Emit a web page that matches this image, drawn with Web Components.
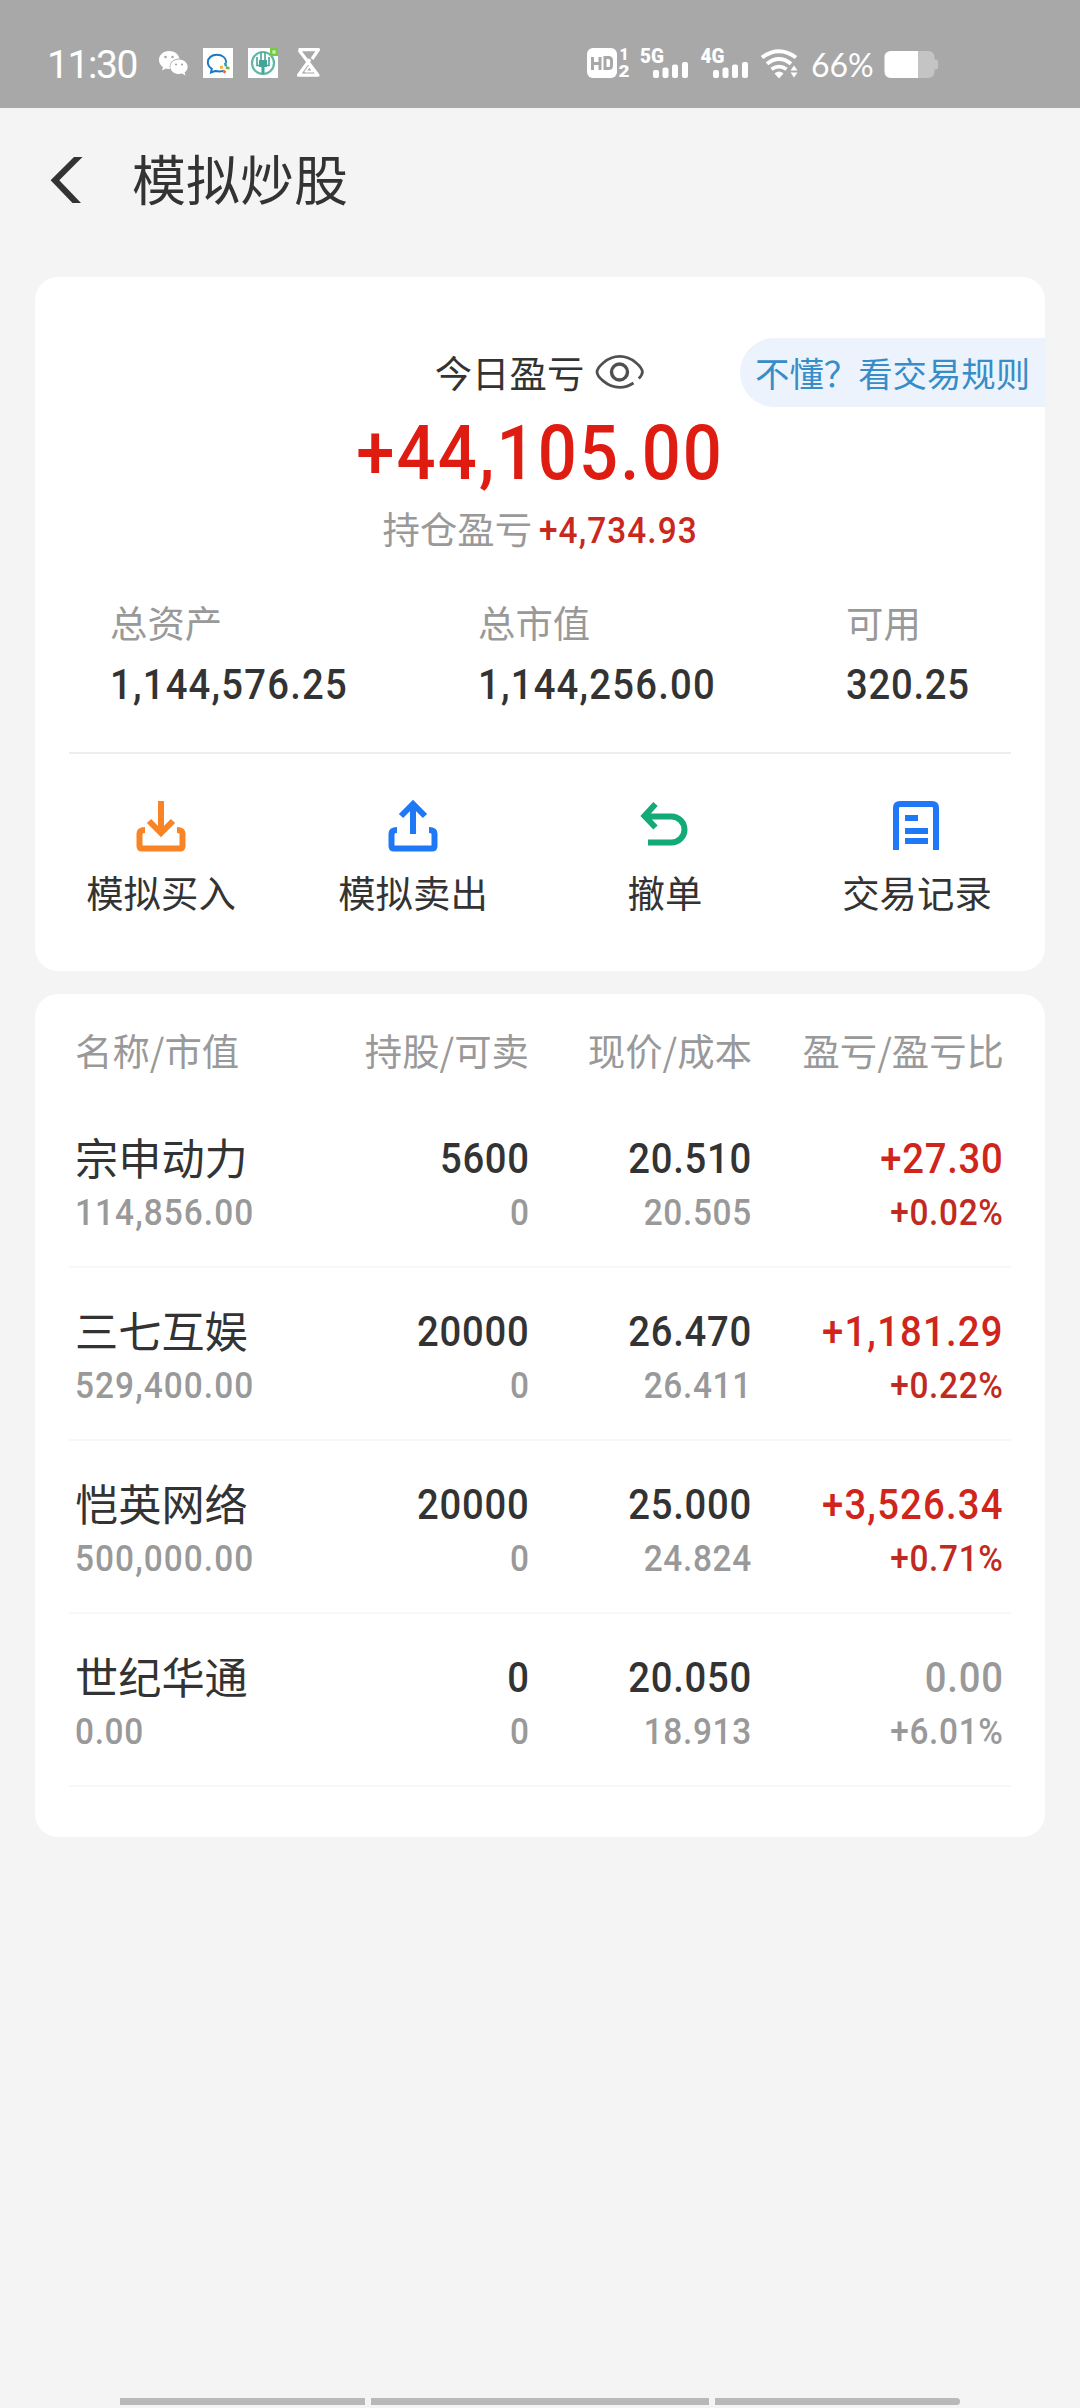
<!DOCTYPE html>
<html lang="zh-CN">
<head>
<meta charset="utf-8">
<title>模拟炒股</title>
<style>
  html, body {
    margin: 0;
    background: #f4f4f4;
  }
  body {
    width: 1080px;
    height: 2408px;
    overflow: hidden;
    font-family: "Noto Sans CJK SC", sans-serif;
    color: #333;
  }
</style>
</head>
<body>
<trade-page></trade-page>

<script>
const define = (name, html, setup) => {
  const template = document.createElement('template');
  template.innerHTML = html;
  customElements.define(name, class extends HTMLElement {
    constructor() {
      super();
      this.attachShadow({ mode: 'open' }).appendChild(template.content.cloneNode(true));
    }
    connectedCallback() {
      if (setup) setup(this, this.shadowRoot);
    }
  });
};

/* condensed figures: size and colour come from the user */
define('num-text', /*html*/ `
  <style>
    :host {
      display: block;
      white-space: nowrap;
      font-family: Roboto, sans-serif;
      font-weight: 500;
      line-height: 44px;
      font-size: 42px;
    }
    span {
      display: inline-block;
      letter-spacing: 0.02em;
      transform: scaleX(0.91);
      transform-origin: var(--num-origin, left) center;
    }
    /* figures with thousands separators are set a little looser */
    .grouped { letter-spacing: 0.032em; }
  </style>
  <span><slot></slot></span>
`, (host, root) => {
  const update = () => root.querySelector('span').classList.toggle('grouped', host.textContent.includes(','));
  root.querySelector('slot').addEventListener('slotchange', update);
  update();
});

define('status-bar', /*html*/ `
  <style>
    :host {
      display: flex;
      align-items: flex-start;
      box-sizing: border-box;
      height: 108px;
      padding: 40px 0 0 47px;
      background: #a8a8a8;
      color: #fff;
    }
    svg { display: block; flex: none; }
    .time {
      width: 105px;
      font: 400 39px/50px Roboto, sans-serif;
      letter-spacing: -1.4px;
    }
    .battery {
      width: 73px;
      font: 400 32px/50px Lato, sans-serif;
      white-space: nowrap;
    }
    text { font-family: Roboto, sans-serif; font-weight: 900; }
  </style>
  <span class="time">11:30</span>
  <svg width="433" height="50" viewBox="152 40 433 50">
    <path fill="#fff" d="M169 51c-6 0-10 4-10 9 0 3 1.500 5.500 4 7l-1 3.500 4-2c1.500.4 2.500.6 4 .5-1.500-6 3-10.500 9.500-10.500-1-4.500-5-7.500-10.500-7.500z"/>
    <path fill="#fff" d="M179 59.500c-5 0-8.700 3.200-8.700 7.200s3.700 7.300 8.700 7.300c1 0 2-.1 3-.4l3.500 1.900-.9-3.100c2-1.300 3-3.400 3-5.700 0-4-3.700-7.200-8.600-7.200z"/>
    <g fill="#a8a8a8"><circle cx="165.500" cy="57" r="1.300"/><circle cx="172.500" cy="57" r="1.300"/><circle cx="176" cy="64.500" r="1.100"/><circle cx="182" cy="64.500" r="1.100"/></g>
    <rect x="203" y="48" width="30" height="30" fill="#fff"/>
    <path fill="none" stroke="#1b79c4" stroke-width="2" d="M223 71c-2 .6-5 .5-8 0l-4 1.500.8-3.700c-2.700-1.700-4-4-4-6.500 0-4.500 4-7.500 9-7.500 5.500 0 9.300 3 9.500 8"/>
    <path fill="#2a9bd8" d="M224 63l2.500-1 .5 4-2.500.5z"/><path fill="#7cb342" d="M226 66l3.500 1v2.500l-4-.5z"/>
    <path fill="#f0592b" d="M223 69.500l3 1.500-.7 2.500-2-.5z"/><path fill="#f9b233" d="M220 66l3-.5v3l-3 .5z"/>
    <rect x="248" y="48" width="30" height="30" fill="#fff"/>
    <circle cx="263" cy="63" r="11" fill="none" stroke="#5fb8a6" stroke-width="2.200"/>
    <path fill="#45a596" d="M259 60h8v7h-2.500v7h-3v-7H259z"/>
    <path fill="none" stroke="#45a596" stroke-width="1.600" d="M257 57v8.500h3M269 57v8.500h-3M261 52v10M265 52v10"/>
    <rect x="270" y="48" width="8" height="8" fill="#7ac943"/><circle cx="274" cy="52" r="2" fill="#b9ecb0"/>
    <g fill="none" stroke="#fff" stroke-width="3.200" stroke-linejoin="round">
      <path d="M298.500 49.700h20l-6.500 9.300M299 50l19 25.200h-19.500l11.500-16"/>
      <path stroke-width="2" d="M305.500 71.500h7.500l-3.500-5.500z"/>
    </g>
  </svg>
  <svg width="226" height="50" viewBox="585 40 226 50">
    <rect x="587" y="48" width="30" height="30" rx="6" fill="#fff"/>
    <path fill="none" stroke="#a8a8a8" stroke-width="3" d="M592.500 57v13M600 57v13M592.500 63.500h7.500M605 57.500h3.500q3 0 3 3v5q0 3-3 3H605z"/>
    <g fill="#fff">
      <text x="619.500" y="60" font-size="16">1</text>
      <text x="618.500" y="77.300" font-size="16" textLength="11" lengthAdjust="spacingAndGlyphs">2</text>
      <text x="640" y="63" font-size="20.500" textLength="24" lengthAdjust="spacingAndGlyphs">5G</text>
      <text x="700.500" y="63" font-size="20.500" textLength="24" lengthAdjust="spacingAndGlyphs">4G</text>
      <rect x="653" y="70" width="6" height="8" rx="2"/><rect x="662.500" y="67.500" width="6" height="10.500" rx="2"/><rect x="672" y="64.500" width="6" height="13.500" rx="2"/><rect x="682" y="62" width="6" height="16" rx="2"/>
      <rect x="713" y="70" width="6" height="8" rx="2"/><rect x="722.500" y="67.500" width="6" height="10.500" rx="2"/><rect x="732" y="64.500" width="6" height="13.500" rx="2"/><rect x="742" y="62" width="6" height="16" rx="2"/>
      <path d="M774.500 73.500q4.700-4 9 0l-4.500 5z"/>
      <path d="M794 65.500l3.500 5h-7zM794 77.500l3.500-5h-7z"/>
    </g>
    <g fill="none" stroke="#fff" stroke-width="4">
      <path d="M762 57.500q17-12.500 34 0"/><path d="M767 63.700q12-9.500 24 0"/><path stroke-width="3.700" d="M771.500 69.300q7.500-5.500 15 0"/>
    </g>
  </svg>
  <span class="battery">66%</span>
  <svg width="56" height="50" viewBox="885 40 56 50">
    <path fill="#c4c4c4" d="M892 51h37q6.500 0 6.500 6.500v2h1q2.500 0 2.500 2.500v5q0 2.500-2.500 2.500h-1v2q0 6.500-6.500 6.500h-37z"/>
    <path fill="#fff" d="M892 51h27v27h-27q-6.500 0-6.500-6.500v-14q0-6.500 6.500-6.500z"/>
  </svg>
`);

define('nav-header', /*html*/ `
  <style>
    :host {
      display: flex;
      align-items: center;
      height: 144px;
      padding-left: 50px;
    }
    svg { width: 34px; height: 48px; margin-right: 48px; }
    span { font-size: 54px; line-height: 70px; margin-top: -5px; }
  </style>
  <svg viewBox="50 156 34 48"><path fill="#333" d="M74 157h8.500L59.300 180.200 81 203h-8.500L50.600 180.300z"/></svg>
  <span><slot></slot></span>
`);

define('panel-card', /*html*/ `
  <style>
    :host {
      display: block;
      position: relative;
      box-sizing: border-box;
      margin: 0 35px 23px;
      border-radius: 23px;
      background: #fff;
      overflow: hidden;
    }
  </style>
  <slot></slot>
`);

define('rules-link', /*html*/ `
  <style>
    /* floats over the right edge of the card */
    :host {
      position: absolute;
      right: 0;
      top: 61px;
      box-sizing: border-box;
      width: 305px;
      height: 69px;
      padding-left: 15px;
      border-radius: 35px 0 0 35px;
      background: #ecf3fc;
      color: #378dc8;
      font-size: 34.400px;
      line-height: 69px;
      white-space: nowrap;
    }
  </style>
  <slot></slot>
`);

define('profit-summary', /*html*/ `
  <style>
    :host {
      display: flex;
      flex-direction: column;
      align-items: center;
      padding-top: 70px;
      font-size: 37.400px;
    }
    .title {
      display: flex;
      align-items: center;
      height: 50px;
      line-height: 50px;
    }
    svg { width: 50px; height: 36px; margin: 0 0 0 11px; }
    .today {
      --num-origin: center;
      margin-top: 21px;
      font-size: 75.500px;
      line-height: 70px;
      color: #df1c12;
    }
    .hold {
      display: flex;
      margin: 18px 0 0 16px;
      line-height: 44px;
      color: #999;
    }
    .hold num-text {
      margin: 3px 0 0 7px;
      font-size: 36.700px;
      color: #c9281e;
    }
  </style>
  <div class="title">
    今日盈亏
    <svg viewBox="596 354 50 36" fill="none" stroke="#505050" stroke-width="2.800">
      <path d="M639.800 378.500c2.600-2.600 3.600-4.800 3.600-6.500 0-4-9.500-15.600-22.700-15.600s-22.700 11.600-22.700 15.600 9.500 15.400 22.700 15.400c5.200 0 9.700-1.700 13.800-4.400"/>
      <circle cx="620.500" cy="372" r="8" stroke-width="3.400"/>
    </svg>
  </div>
  <num-text class="today"></num-text>
  <div class="hold">持仓盈亏<num-text></num-text></div>
`, (host, root) => {
  root.querySelector('.today').textContent = host.getAttribute('today');
  root.querySelector('.hold num-text').textContent = host.getAttribute('hold');
});

define('asset-stat', /*html*/ `
  <style>
    :host { display: block; }
    div {
      margin-bottom: 19px;
      font-size: 37.400px;
      line-height: 44px;
      color: #999;
    }
  </style>
  <div></div>
  <num-text></num-text>
`, (host, root) => {
  root.querySelector('div').textContent = host.getAttribute('label');
  root.querySelector('num-text').textContent = host.getAttribute('value');
});

const icons = {
  buy: `<g stroke="#f98425"><path d="M26 2v32M14 22l12 12 12-12"/><path stroke-linejoin="round" d="M10 31q-5.500 0-5.500 4v12q0 2.500 2.500 2.500h38q2.500 0 2.500-2.500V35q0-4-5.500-4"/></g>`,
  sell: `<g stroke="#1f78f6"><path d="M26 35V5M14 17L26 5l12 12"/><path stroke-linejoin="round" d="M10 31q-5.500 0-5.500 4v12q0 2.500 2.500 2.500h38q2.500 0 2.500-2.500V35q0-4-5.500-4"/></g>`,
  cancel: `<path stroke="#12aa78" d="M16.500 5L5.500 17l11 11.500M6 17.500h26.500a12.700 12.700 0 0 1 0 26H9"/>`,
  record: `<g stroke="#1f78f6"><path d="M5 51V9q0-4 4-4h32q4 0 4 4v42"/><path d="M14 19h13M14 32h23M14 42h23"/></g>`
};

define('trade-action', /*html*/ `
  <style>
    :host {
      display: flex;
      flex-direction: column;
      align-items: center;
      font-size: 37.400px;
      line-height: 44px;
    }
    svg { width: 52px; height: 54px; margin-bottom: 17px; fill: none; stroke-width: 6; }
  </style>
  <svg viewBox="0 0 52 54"></svg>
  <slot></slot>
`, (host, root) => {
  root.querySelector('svg').innerHTML = icons[host.getAttribute('icon')];
});

define('holding-head', /*html*/ `
  <style>
    :host {
      display: grid;
      grid-template-columns: 215px 239px 223px 252px;
      padding: 0 40px;
      height: 67px;
      font-size: 37.400px;
      line-height: 44px;
      color: #999;
      text-align: right;
      white-space: nowrap;
    }
    ::slotted(:first-child) { text-align: left; }
  </style>
  <slot></slot>
`);

define('holding-row', /*html*/ `
  <style>
    :host {
      display: grid;
      grid-template-columns: 215px 239.500px 222.500px 252px;
      align-content: start;
      row-gap: 10px;
      box-sizing: border-box;
      height: 173px;
      margin: 0 34px;
      padding: 39px 6px 0;
      border-bottom: 2px solid #f8f8f8;
      --num-origin: right;
    }
    .name { font-size: 43.200px; line-height: 44px; white-space: nowrap; }
    num-text { text-align: right; padding-top: 3px; }
    .sub { font-size: 36.700px; color: #999; padding-top: 0; }
    .value { text-align: left; --num-origin: left; }
    :host([trend="up"]) .gain { color: #cf251b; }
    :host([trend="up"]) .rate { color: #c12a21; }
    :host([trend="flat"]) .gain { color: #999; }
  </style>
  <span class="name"></span>
  <num-text class="count"></num-text>
  <num-text class="price"></num-text>
  <num-text class="gain"></num-text>
  <num-text class="sub value"></num-text>
  <num-text class="sub sellable"></num-text>
  <num-text class="sub cost"></num-text>
  <num-text class="sub rate"></num-text>
`, (host, root) => {
  ['name', 'count', 'price', 'gain', 'value', 'sellable', 'cost', 'rate'].forEach(key => {
    root.querySelector('.' + key).textContent = host.getAttribute(key);
  });
});

define('gesture-bar', /*html*/ `
  <style>
    :host {
      display: grid;
      grid-template-columns: 245px 338px 245px;
      gap: 6px;
      height: 7px;
      margin: auto 120px 3px;
    }
    i { background: #b9b9b9; }
    i:first-child { border-radius: 4px 0 0 4px; }
    i:last-child { border-radius: 0 4px 4px 0; }
  </style>
  <i></i><i></i><i></i>
`);

define('trade-page', /*html*/ `
  <style>
    :host {
      display: flex;
      flex-direction: column;
      height: 2408px;
    }
    nav-header { margin-bottom: 25px; }
    .overview { height: 694px; }
    .stats {
      display: grid;
      grid-template-columns: repeat(3, 368px);
      margin: 47px 0 0 75px;
    }
    hr {
      height: 2px;
      margin: 45px 34px;
      border: 0;
      background: #eee;
    }
    .actions {
      display: grid;
      grid-template-columns: repeat(4, 252px);
    }
    .holdings { height: 843px; padding-top: 34px; }
  </style>
  <status-bar></status-bar>
  <nav-header>模拟炒股</nav-header>
  <panel-card class="overview">
    <profit-summary today="+44,105.00" hold="+4,734.93"></profit-summary>
    <rules-link>不懂？看交易规则</rules-link>
    <div class="stats">
      <asset-stat label="总资产" value="1,144,576.25"></asset-stat>
      <asset-stat label="总市值" value="1,144,256.00"></asset-stat>
      <asset-stat label="可用" value="320.25"></asset-stat>
    </div>
    <hr>
    <div class="actions">
      <trade-action icon="buy">模拟买入</trade-action>
      <trade-action icon="sell">模拟卖出</trade-action>
      <trade-action icon="cancel">撤单</trade-action>
      <trade-action icon="record">交易记录</trade-action>
    </div>
  </panel-card>
  <panel-card class="holdings">
    <holding-head><span>名称/市值</span><span>持股/可卖</span><span>现价/成本</span><span>盈亏/盈亏比</span></holding-head>
    <holding-row trend="up" name="宗申动力" value="114,856.00" count="5600" sellable="0" price="20.510" cost="20.505" gain="+27.30" rate="+0.02%"></holding-row>
    <holding-row trend="up" name="三七互娱" value="529,400.00" count="20000" sellable="0" price="26.470" cost="26.411" gain="+1,181.29" rate="+0.22%"></holding-row>
    <holding-row trend="up" name="恺英网络" value="500,000.00" count="20000" sellable="0" price="25.000" cost="24.824" gain="+3,526.34" rate="+0.71%"></holding-row>
    <holding-row trend="flat" name="世纪华通" value="0.00" count="0" sellable="0" price="20.050" cost="18.913" gain="0.00" rate="+6.01%"></holding-row>
  </panel-card>
  <gesture-bar></gesture-bar>
`);
</script>
</body>
</html>
